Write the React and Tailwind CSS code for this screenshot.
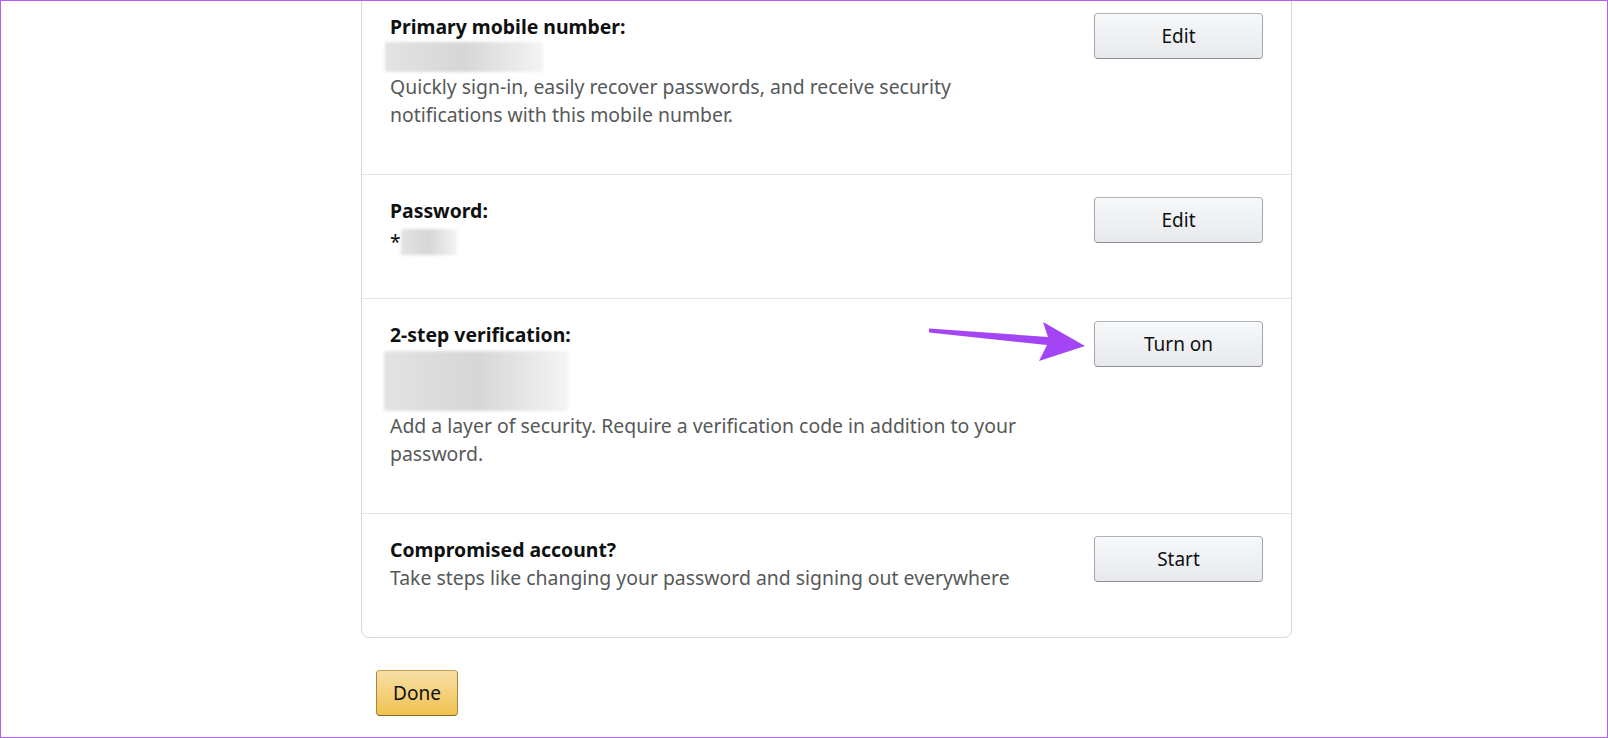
import React from "react";

const FONT = { fontFamily: '"Noto Sans", "Open Sans", sans-serif' };

function GrayButton({ children }) {
  return (
    <button className="w-[169px] h-[46px] shrink-0 rounded-[4px] border border-[#a2a6ac] border-t-[#adb1b8] border-b-[#8d9096] bg-gradient-to-b from-[#f7f8fa] to-[#e7e9ec] text-[19px] text-[#0f1111] shadow-[inset_0_1px_0_rgba(255,255,255,0.6)]">
      {children}
    </button>
  );
}

function Blur({ className }) {
  return <div className={`rounded-[2px] bg-gradient-to-r from-[#e3e3e3] via-[#d6d6d6] to-[#f4f4f4] blur-[1.5px] ${className}`} />;
}

function Row({ title, button, first, children }) {
  return (
    <div className={`flex justify-between pl-[28px] pr-[28px] pt-[22px] pb-[45px] ${first ? "" : "border-t border-[#e3e6e6]"}`}>
      <div className="w-[660px]">
        <div className="text-[19.4px] leading-[28px] font-bold text-[#0f1111]">{title}</div>
        {children}
      </div>
      <GrayButton>{button}</GrayButton>
    </div>
  );
}

export default function App() {
  return (
    <div style={FONT} className="relative w-[1608px] h-[738px] overflow-hidden bg-white border border-[#b45cf8]">
      <div className="ml-[360px] mt-[-11px] w-[931px] border border-[#d5d9d9] rounded-b-[8px] bg-white">
        <Row first title="Primary mobile number:" button="Edit">
          <div className="h-[32px] pt-[1px]">
            <Blur className="ml-[-5px] w-[158px] h-[30px]" />
          </div>
          <p className="text-[19.4px] leading-[28px] text-[#565959]">
            Quickly sign-in, easily recover passwords, and receive security notifications with this mobile number.
          </p>
        </Row>
        <Row title="Password:" button="Edit">
          <div className="flex items-center h-[28px] text-[19.4px] text-[#0f1111]">
            <span className="mt-[6px]">*</span>
            <Blur className="mt-[6px] w-[56px] h-[26px]" />
          </div>
        </Row>
        <Row title="2-step verification:" button="Turn on">
          <div className="h-[63px] pt-[2px]">
            <Blur className="ml-[-6px] w-[184px] h-[60px]" />
          </div>
          <p className="text-[19.4px] leading-[28px] text-[#565959]">
            Add a layer of security. Require a verification code in addition to your password.
          </p>
        </Row>
        <Row title="Compromised account?" button="Start">
          <p className="text-[19.4px] leading-[28px] text-[#565959]">
            Take steps like changing your password and signing out everywhere
          </p>
        </Row>
      </div>

      <div className="ml-[375px] mt-[32px]">
        <button className="w-[82px] h-[46px] rounded-[4px] border border-[#a88734] border-t-[#c4a44a] border-b-[#846a29] bg-gradient-to-b from-[#f7dfa5] to-[#f0c14b] text-[19px] text-[#0f1111]">
          Done
        </button>
      </div>

      {/* annotation arrow */}
      <svg className="absolute left-0 top-0 pointer-events-none" width="1608" height="738">
        <path
          d="M928 327.5 L1047 336 L1042 321 L1084 345 L1038 360 L1046 344 L928 331.5 Z"
          fill="#a445f5"
          strokeLinejoin="round"
        />
      </svg>
    </div>
  );
}
